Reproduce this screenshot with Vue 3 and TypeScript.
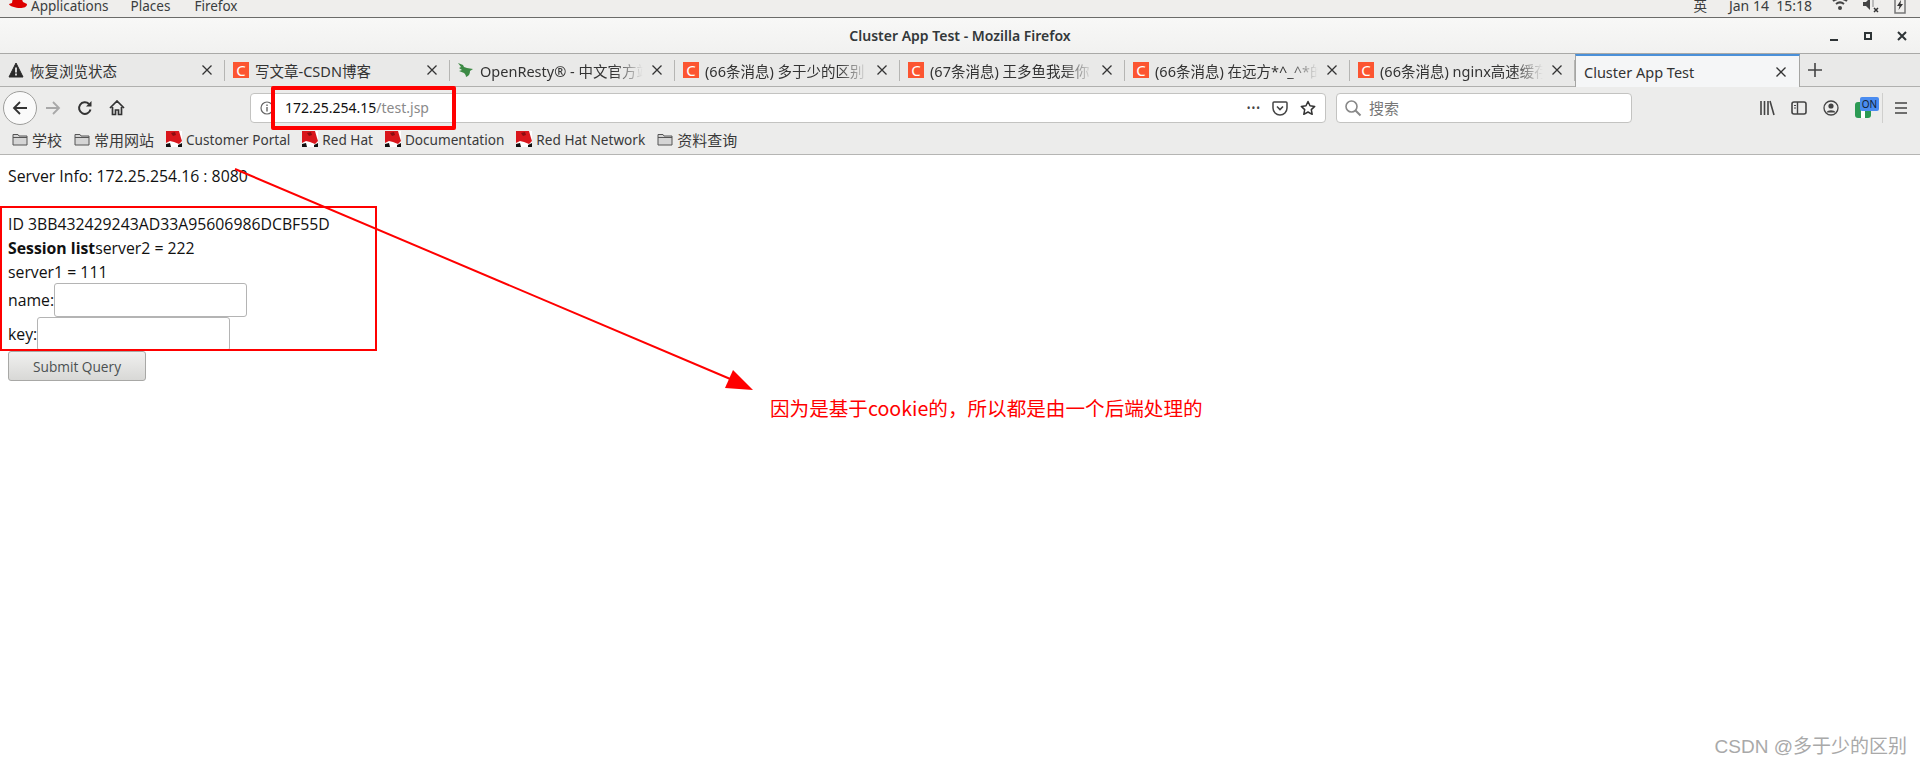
<script setup lang="ts">
interface Tab {
  title: string;
  icon: 'warn' | 'csdn' | 'leaf' | 'none';
  active?: boolean;
  fade?: boolean;
}

interface Bookmark {
  label: string;
  icon: 'folder' | 'hat';
}

const tabs: Tab[] = [
  { title: '恢复浏览状态', icon: 'warn' },
  { title: '写文章-CSDN博客', icon: 'csdn' },
  { title: 'OpenResty® - 中文官方站', icon: 'leaf', fade: true },
  { title: '(66条消息) 多于少的区别', icon: 'csdn', fade: true },
  { title: '(67条消息) 王多鱼我是你', icon: 'csdn', fade: true },
  { title: '(66条消息) 在远方*^_^*的博客', icon: 'csdn', fade: true },
  { title: '(66条消息) nginx高速缓存', icon: 'csdn', fade: true },
  { title: 'Cluster App Test', icon: 'none', active: true },
];

const bookmarks: Bookmark[] = [
  { label: '学校', icon: 'folder' },
  { label: '常用网站', icon: 'folder' },
  { label: 'Customer Portal', icon: 'hat' },
  { label: 'Red Hat', icon: 'hat' },
  { label: 'Documentation', icon: 'hat' },
  { label: 'Red Hat Network', icon: 'hat' },
  { label: '资料查询', icon: 'folder' },
];
</script>

<template>
  <div class="screen">
    <!-- GNOME顶栏 -->
    <div class="panel">
      <svg class="panel-hat" width="20" height="14" viewBox="0 0 20 14">
        <path d="M5 0h8l2 5 4 2c0 3-3 4-7 4S1 9 1 7l3-1z" fill="#d00" />
      </svg>
      <span class="panel-item first">Applications</span>
      <span class="panel-item">Places</span>
      <span class="panel-item last">Firefox</span>
      <div class="panel-right">
        <span class="panel-lang">英</span>
        <span class="panel-clock">Jan 14&nbsp;&nbsp;15:18</span>
        <svg width="16" height="14" viewBox="0 0 16 14">
          <path d="M1 2c4-3 10-3 14 0M4 5c2.500-2 5.500-2 8 0" fill="none" stroke="#444" stroke-width="2" />
          <circle cx="8" cy="9" r="2" fill="#444" />
        </svg>
        <svg width="18" height="14" viewBox="0 0 18 14">
          <path d="M1 3h3l4-4v12L4 7H1z" fill="#444" />
          <path d="M10 0h2v8h-2z" fill="#bbb" />
          <path d="M12 9l4 4m0-4l-4 4" stroke="#333" stroke-width="1.500" />
        </svg>
        <svg width="12" height="16" viewBox="0 0 12 16">
          <rect x="1" y="0" width="10" height="15" fill="none" stroke="#777" stroke-width="1.500" />
          <path d="M7 2L3 8h2.500L4.500 12 9 6H6.500z" fill="#333" />
        </svg>
      </div>
    </div>

    <!-- 窗口标题栏 -->
    <div class="titlebar">
      <span class="title">Cluster App Test - Mozilla Firefox</span>
      <div class="win-controls">
        <svg width="12" height="12" viewBox="0 0 12 12"><path d="M2 10h8" stroke="#2e3436" stroke-width="2" /></svg>
        <svg width="12" height="12" viewBox="0 0 12 12"><rect x="3" y="3" width="6" height="6" fill="none" stroke="#2e3436" stroke-width="2" /></svg>
        <svg width="12" height="12" viewBox="0 0 12 12"><path d="M2 2l8 8m0-8l-8 8" stroke="#2e3436" stroke-width="2" /></svg>
      </div>
    </div>

    <!-- 标签栏 -->
    <div class="tabstrip">
      <div v-for="tab in tabs" :key="tab.title" class="tab" :class="{ active: tab.active }">
        <svg v-if="tab.icon === 'warn'" class="fav" width="16" height="16" viewBox="0 0 16 16">
          <path d="M8 1l7 14H1z" fill="#2b2b2b" stroke="#2b2b2b" stroke-linejoin="round" />
          <path d="M8 5.500v5M8 11.500v2" stroke="#fff" stroke-width="1.600" />
        </svg>
        <span v-else-if="tab.icon === 'csdn'" class="fav csdn">C</span>
        <svg v-else-if="tab.icon === 'leaf'" class="fav" width="16" height="16" viewBox="0 0 16 16">
          <path d="M0 1l5 2 1 2 3 1 6 1-3 2c0 3-1 5-4 6 0-2-1-3-2-4L1 9l3-1-3-2 2-1z" fill="#3c8a45" />
        </svg>
        <span class="tab-title" :class="{ fade: tab.fade }">{{ tab.title }}</span>
        <svg class="tab-close" width="12" height="12" viewBox="0 0 12 12">
          <path d="M1.500 1.500l9 9m0-9l-9 9" stroke="#333" stroke-width="1.300" />
        </svg>
      </div>
      <svg class="new-tab" width="16" height="16" viewBox="0 0 16 16">
        <path d="M8 1v14M1 8h14" stroke="#444" stroke-width="1.600" />
      </svg>
    </div>

    <!-- 导航栏 -->
    <div class="navbar">
      <button class="back-btn">
        <svg width="18" height="18" viewBox="0 0 18 18">
          <path d="M16 9H3m6-6L3 9l6 6" fill="none" stroke="#333" stroke-width="1.800" />
        </svg>
      </button>
      <svg class="nav-icon" width="18" height="18" viewBox="0 0 18 18">
        <path d="M2 9h13M9 3l6 6-6 6" fill="none" stroke="#a8a8a8" stroke-width="1.800" />
      </svg>
      <svg class="nav-icon" width="16" height="16" viewBox="0 0 16 16">
        <path d="M13.500 9.500A5.800 5.800 0 1 1 12 4" fill="none" stroke="#333" stroke-width="2" />
        <path d="M14.500 1v5.500H9z" fill="#333" />
      </svg>
      <svg class="nav-icon" width="16" height="16" viewBox="0 0 16 16">
        <path d="M1 8l7-7 7 7M3.500 7v7.500h3V10h3v4.500h3V7" fill="none" stroke="#333" stroke-width="1.700" />
      </svg>

      <div class="urlbar">
        <svg width="14" height="14" viewBox="0 0 14 14">
          <circle cx="7" cy="7" r="6" fill="none" stroke="#666" stroke-width="1.200" />
          <path d="M7 6v4.500M7 3.500v1.500" stroke="#666" stroke-width="1.400" />
        </svg>
        <span class="url"><span class="url-host">172.25.254.15</span>/test.jsp</span>
        <span class="url-more">•••</span>
        <svg width="16" height="16" viewBox="0 0 16 16">
          <path d="M2 2h12a1 1 0 0 1 1 1v5a7 7 0 0 1-14 0V3a1 1 0 0 1 1-1z" fill="none" stroke="#444" stroke-width="1.500" />
          <path d="M5 6.500l3 3 3-3" fill="none" stroke="#444" stroke-width="1.600" />
        </svg>
        <svg class="url-star" width="16" height="16" viewBox="0 0 16 16">
          <path d="M8 1.500l2 4.300 4.700.6-3.400 3.200.9 4.700L8 12l-4.200 2.300.9-4.700L1.300 6.400 6 5.800z" fill="none" stroke="#333" stroke-width="1.500" stroke-linejoin="round" />
        </svg>
      </div>

      <div class="searchbar">
        <svg width="18" height="18" viewBox="0 0 18 18">
          <circle cx="7.500" cy="7.500" r="5.500" fill="none" stroke="#888" stroke-width="1.600" />
          <path d="M11.500 11.500l5 5" stroke="#888" stroke-width="2" />
        </svg>
        <span class="search-text">搜索</span>
      </div>

      <div class="toolbar">
        <svg width="16" height="16" viewBox="0 0 16 16">
          <path d="M2 1v14M5.500 1v14M9 1v14M11 1l4 14" fill="none" stroke="#444" stroke-width="1.600" />
        </svg>
        <svg width="16" height="16" viewBox="0 0 16 16">
          <rect x="1" y="2" width="14" height="12" rx="2" fill="none" stroke="#444" stroke-width="1.600" />
          <path d="M6.500 2v12" stroke="#444" stroke-width="1.400" />
          <path d="M3 5.500h2M3 8h2" stroke="#444" stroke-width="1" />
        </svg>
        <svg width="16" height="16" viewBox="0 0 16 16">
          <circle cx="8" cy="8" r="7" fill="none" stroke="#444" stroke-width="1.300" />
          <circle cx="8" cy="6" r="2.600" fill="#444" />
          <path d="M3.500 12.500c1-3 8-3 9 0z" fill="#444" />
        </svg>
        <div class="ext">
          <span class="ext-base"></span>
          <span class="ext-badge">ON</span>
        </div>
        <span class="tool-sep"></span>
        <svg width="14" height="14" viewBox="0 0 14 14">
          <path d="M1 2h12M1 7h12M1 12h12" stroke="#444" stroke-width="1.700" />
        </svg>
      </div>
    </div>

    <!-- 书签栏 -->
    <div class="bookmarks">
      <div
        v-for="item in bookmarks"
        :key="item.label"
        class="bookmark"
        :class="{ 'is-folder': item.icon === 'folder' }"
      >
        <svg v-if="item.icon === 'folder'" width="16" height="16" viewBox="0 0 16 16">
          <path d="M1 3.500h5l1 1.500h8v9H1z" fill="#d5d5d5" stroke="#555" />
          <path d="M1 6.500h14" stroke="#555" />
        </svg>
        <svg v-else width="16" height="16" viewBox="0 0 16 16">
          <rect width="16" height="16" fill="#fff" />
          <path d="M0 12V0h13l2 7 1 3-3 3-5-2-4-1z" fill="#d9161c" />
          <path d="M5 2l4-1 1 3-3 1z" fill="#8c0d11" />
          <path d="M0 13l4-1 1 4H0zM12 14l4-2v4h-4z" fill="#111" />
        </svg>
        <span>{{ item.label }}</span>
      </div>
    </div>

    <!-- 页面内容 -->
    <div class="page">
      <div class="server-info">Server Info: 172.25.254.16 : 8080</div>
      <div class="line">ID 3BB432429243AD33A95606986DCBF55D</div>
      <div class="line"><b>Session list</b>server2 = 222</div>
      <div class="line">server1 = 111</div>
      <form class="session-form" @submit.prevent>
        <div class="field name-field">name:<input class="text-input" type="text" /></div>
        <div class="field">key:<input class="text-input" type="text" /></div>
        <button class="submit-btn" type="submit">Submit Query</button>
      </form>
    </div>

    <!-- 截图标注 -->
    <div class="mark url-mark"></div>
    <div class="mark session-mark"></div>
    <svg class="arrow" width="1920" height="767" viewBox="0 0 1920 767">
      <path d="M235 169L735 381" stroke="#f00" stroke-width="2" />
      <path d="M753 390L725 388L733 370z" fill="#f00" />
    </svg>
    <div class="note">因为是基于cookie的，所以都是由一个后端处理的</div>
    <div class="watermark">CSDN @多于少的区别</div>
  </div>
</template>

<style>
html,
body {
  margin: 0;
  background: #fff;
}
</style>

<style scoped>
.screen {
  position: relative;
  width: 1920px;
  height: 767px;
  overflow: hidden;
  font-family: "Noto Sans", "Noto Sans CJK SC", sans-serif;
  color: #2e3436;
  background: #fff;
}

.panel {
  display: flex;
  align-items: flex-end;
  height: 17px;
  padding-left: 8px;
  overflow: hidden;
  font-size: 13.500px;
  line-height: 20px;
  color: #3a3d3e;
  background: #efeeec;
  border-bottom: 1px solid #6b6b69;
  box-sizing: content-box;
}

.panel-hat {
  flex-shrink: 0;
  margin-bottom: 6px;
}

.panel-item {
  margin-left: 22px;
  margin-bottom: 1px;
}

.panel-item.first {
  margin-left: 3px;
}

.panel-item.last {
  margin-left: 24px;
}

.panel-right {
  display: flex;
  align-items: center;
  margin-left: auto;
  padding-right: 14px;
  margin-bottom: 1px;
  gap: 14px;
}

.panel-lang {
  margin-right: 8px;
}

.panel-clock {
  margin-right: 6px;
  font-size: 14px;
}

.titlebar {
  position: relative;
  display: flex;
  align-items: center;
  justify-content: center;
  height: 36px;
  box-sizing: border-box;
  background: linear-gradient(#f8f8f7, #f1f1f0);
  border-bottom: 1px solid #a9a9a7;
}

.title {
  font-size: 14px;
  font-weight: 600;
  color: #33383a;
}

.win-controls {
  position: absolute;
  top: 12px;
  right: 12px;
  display: flex;
  gap: 22px;
}

.tabstrip {
  display: flex;
  height: 33px;
  background: #e9e9e8;
  border-bottom: 1px solid #b0b0ae;
  box-sizing: border-box;
}

.tab {
  display: flex;
  align-items: center;
  flex-shrink: 0;
  width: 225px;
  padding: 0 12px 0 8px;
  box-sizing: border-box;
  font-size: 14.500px;
  color: #333;
  position: relative;
}

.tab:not(.active)::after {
  position: absolute;
  top: 6px;
  right: 0;
  bottom: 5px;
  width: 1px;
  content: "";
  background: #b5b5b3;
}

.tab.active {
  height: 33px;
  padding-left: 8px;
  background: #f5f6f7;
  border-top: 2px solid #4a90d9;
  border-left: 1px solid #a5a5a3;
  border-right: 1px solid #a5a5a3;
}

.fav {
  flex-shrink: 0;
  margin-right: 6px;
}

.csdn {
  display: flex;
  align-items: center;
  justify-content: center;
  width: 16px;
  height: 16px;
  font-size: 15px;
  line-height: 16px;
  color: #fff;
  background: #fc5531;
}

.tab-title {
  flex: 1;
  min-width: 0;
  overflow: hidden;
  white-space: nowrap;
}

.tab-title.fade {
  -webkit-mask-image: linear-gradient(to right, #000 82%, transparent);
  mask-image: linear-gradient(to right, #000 82%, transparent);
}

.tab-close {
  flex-shrink: 0;
  margin-left: 8px;
}

.new-tab {
  align-self: center;
  margin-left: 7px;
}

.navbar {
  display: flex;
  align-items: center;
  height: 37px;
  padding-top: 4px;
  box-sizing: border-box;
  background: #ececeb;
}

.back-btn {
  display: flex;
  align-items: center;
  justify-content: center;
  flex-shrink: 0;
  width: 34px;
  height: 34px;
  padding: 0;
  margin-left: 3px;
  background: #fafafa;
  border: 1px solid #9d9d9b;
  border-radius: 50%;
}

.nav-icon {
  flex-shrink: 0;
  margin-left: 15px;
}

.nav-icon:nth-of-type(1) {
  margin-left: 7px;
}

.nav-icon:nth-of-type(3) {
  margin-left: 16px;
}

.urlbar {
  display: flex;
  align-items: center;
  flex-shrink: 0;
  width: 1076px;
  height: 30px;
  padding: 0 9px;
  margin-left: 125px;
  gap: 9px;
  box-sizing: border-box;
  background: #fff;
  border: 1px solid #c3c3c1;
  border-radius: 4px;
}

.url {
  flex: 1;
  margin-left: 2px;
  font-size: 14px;
  color: #8a8a8a;
}

.url-host {
  color: #111;
}

.url-more {
  margin-right: 2px;
  font-size: 10px;
  color: #444;
  letter-spacing: 1px;
}

.url-star {
  margin-left: 3px;
}

.searchbar {
  display: flex;
  align-items: center;
  flex-shrink: 0;
  width: 296px;
  height: 30px;
  padding: 0 7px;
  margin-left: 10px;
  gap: 7px;
  box-sizing: border-box;
  background: #fff;
  border: 1px solid #c3c3c1;
  border-radius: 4px;
}

.search-text {
  font-size: 15px;
  color: #777;
}

.toolbar {
  display: flex;
  align-items: center;
  margin-left: 127px;
  gap: 16px;
}

.ext {
  position: relative;
  width: 16px;
  height: 16px;
  margin-top: 4px;
  background: #2b9a53;
  border-radius: 3px;
}

.ext-base {
  position: absolute;
  left: 6px;
  bottom: 0;
  width: 4px;
  height: 9px;
  background: #fff;
}

.ext-badge {
  position: absolute;
  top: -5px;
  left: 5px;
  width: 19px;
  height: 14px;
  font-size: 10px;
  line-height: 14px;
  text-align: center;
  color: #123;
  background: #4a8cf0;
  border-radius: 2px;
}

.tool-sep {
  width: 1px;
  height: 30px;
  margin: 0 -5px;
  background: #cfcfcd;
}

.bookmarks {
  display: flex;
  align-items: center;
  height: 31px;
  padding-left: 12px;
  gap: 12px;
  box-sizing: border-box;
  font-size: 13.600px;
  color: #3a3a3a;
  background: #ececeb;
  border-bottom: 1px solid #b5b5b3;
}

.bookmark {
  display: flex;
  align-items: center;
  gap: 4px;
}

.bookmark.is-folder {
  font-size: 15px;
}

.page {
  padding: 8px 8px 0;
  font-family: "Open Sans", "Noto Sans", sans-serif;
  font-size: 15.800px;
  line-height: 24px;
  color: #111;
}

.server-info {
  margin-bottom: 24px;
  padding-top: 1px;
}

.session-form {
  margin: 0;
}

.field {
  display: flex;
  align-items: center;
  height: 34px;
}

.name-field {
  margin-top: -1px;
}

.text-input {
  width: 193px;
  height: 34px;
  padding: 0 8px;
  box-sizing: border-box;
  background: #fff;
  border: 1px solid #b4b4b4;
  border-radius: 3px;
  outline: none;
}

.submit-btn {
  display: block;
  width: 138px;
  height: 30px;
  padding: 0;
  font-family: inherit;
  font-size: 13.700px;
  color: #4b5051;
  background: linear-gradient(#f0f0ef, #d8d8d6);
  border: 1px solid #a8a8a6;
  border-radius: 3px;
}

.mark {
  position: absolute;
  box-sizing: border-box;
  border-style: solid;
  border-color: #f00;
}

.url-mark {
  top: 86px;
  left: 271px;
  width: 185px;
  height: 44px;
  border-width: 4px;
  border-radius: 2px;
}

.session-mark {
  top: 206px;
  left: 0;
  width: 377px;
  height: 145px;
  border-width: 2px;
}

.arrow {
  position: absolute;
  top: 0;
  left: 0;
  pointer-events: none;
}

.note {
  position: absolute;
  top: 394px;
  left: 770px;
  font-family: "Noto Sans CJK SC", sans-serif;
  font-size: 19.600px;
  line-height: 28px;
  color: #f00;
}

.watermark {
  position: absolute;
  top: 734px;
  right: 13px;
  font-family: "Liberation Sans", "Noto Sans CJK SC", sans-serif;
  font-size: 19px;
  line-height: 26px;
  color: #a9a9a9;
}
</style>
